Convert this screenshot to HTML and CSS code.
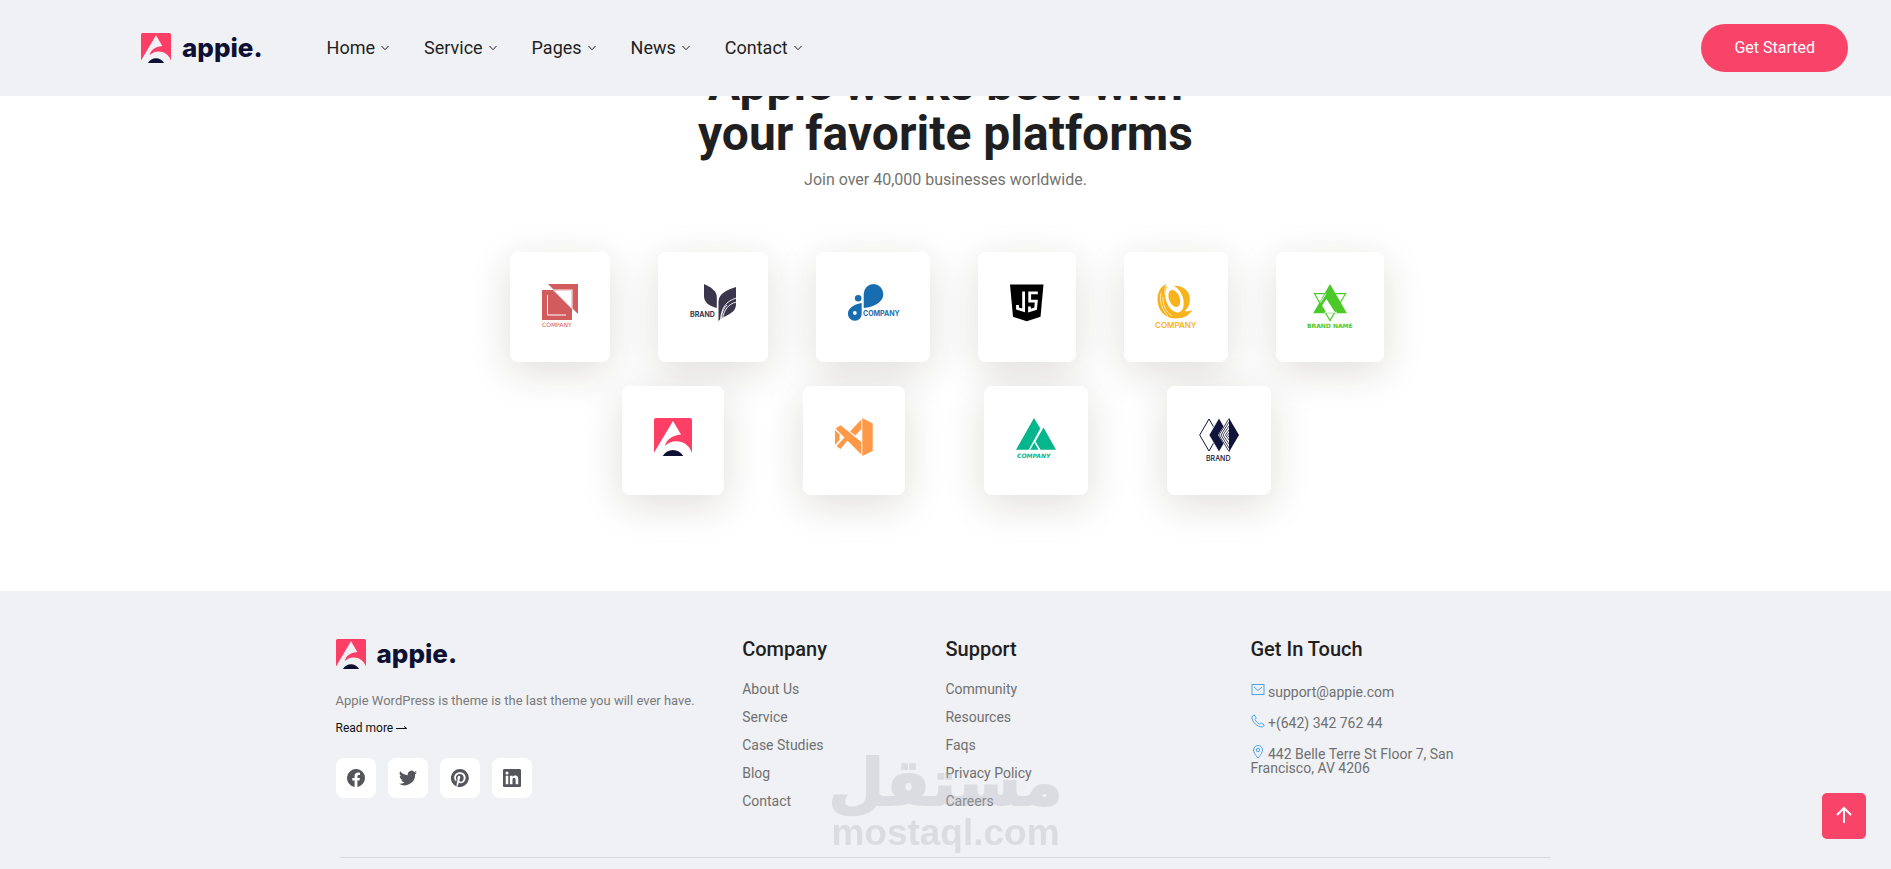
FILE: index.html
```html
<!DOCTYPE html>
<html lang="en">
<head>
<meta charset="utf-8">
<title>Appie</title>
<link rel="stylesheet" href="styles.css">
</head>
<body>
<svg class="defs" aria-hidden="true">
  <symbol id="mark" viewBox="0 0 38 38">
    <path fill="#ff3e66" d="M2 0H36a2 2 0 0 1 2 2V34.7C35 27 29 23.3 22.5 23.3C17.5 23.3 14 25 11 28C12.5 22 17 17.5 27 16.5L19 3L0 34.7V2a2 2 0 0 1 2-2z"/>
    <path fill="#0e1133" d="M8.7 38C11 34 15 32 19 32s8 2 10.3 6z"/>
  </symbol>
  <symbol id="caret" viewBox="0 0 10 10"><path d="M1.500 3L5 6.700L8.500 3" fill="none" stroke="currentColor" stroke-width="1"/></symbol>
</svg>

<header class="header">
  <a class="logo" href="#"><svg class="logo-mark"><use href="#mark"/></svg><span class="logo-text">appie.</span></a>
  <nav class="nav">
    <a href="#">Home<svg class="caret"><use href="#caret"/></svg></a>
    <a href="#">Service<svg class="caret"><use href="#caret"/></svg></a>
    <a href="#">Pages<svg class="caret"><use href="#caret"/></svg></a>
    <a href="#">News<svg class="caret"><use href="#caret"/></svg></a>
    <a href="#">Contact<svg class="caret"><use href="#caret"/></svg></a>
  </nav>
  <a class="cta" href="#">Get Started</a>
</header>

<main class="platforms">
  <h2 class="title">Appie works best with<br>your favorite platforms</h2>
  <p class="subtitle">Join over 40,000 businesses worldwide.</p>

  <div class="brands">
    <div class="brand"><svg width="36" height="46" viewBox="0 0 36 46">
      <path fill="#d15b5d" d="M6 0H36V30z"/><path fill="#fff" d="M11 5.500H30.500V25z"/>
      <path fill="#d15b5d" d="M0 6H11L30 25V36H0z"/>
      <path fill="none" stroke="#e9a9aa" stroke-width=".7" d="M11 6.300H29.700V25"/>
      <path fill="none" stroke="#fff" stroke-width="1" d="M5.500 11V31H24"/>
      <text class="tiny red" x="0" y="43">COMPANY</text></svg></div>
    <div class="brand"><svg width="46" height="46" viewBox="0 0 46 46">
      <path fill="#3c364c" d="M14 0V12C14 19 20 22 26.800 24V13C26.800 7 21 3 14 0zM46 3V20C46 30 36 30 28.500 37V18C28.500 10 36 6 46 3z"/>
      <path fill="none" stroke="#fff" stroke-width=".9" d="M46.500 14C36 17 31 24 30.500 37M46.500 18C38 20 34 26 32.500 35M37 21C33 25 32 29 31 36"/>
      <text class="small violet" x="0" y="33">BRAND</text></svg></div>
    <div class="brand"><svg width="50" height="46" viewBox="0 0 50 46">
      <path fill="#176db0" d="M15.700 24V10a9.800 10 0 1 1 19.600 0C35.300 19 25 23 15.700 24zM13.700 19V29a6.900 6.900 0 1 1-13.700 0C0 24 7 20 13.700 19z"/>
      <circle fill="#176db0" cx="10.200" cy="14.300" r="3.300"/><circle fill="#fff" cx="6.800" cy="29" r="1.900"/>
      <text class="small blue" x="15" y="32">COMPANY</text></svg></div>
    <div class="brand"><svg width="34" height="46" viewBox="0 0 34 46">
      <path d="M0 .5H33.500L30.500 32.800L16.700 37.300L3 32.800z"/>
      <path fill="none" stroke="#fff" stroke-width="2.800" d="M13.600 7.500V26.300L7.500 24.500V21M27.800 8.900H19.700V17.200H26.300L25.600 24.600L19.500 26.500V22.500"/></svg></div>
    <div class="brand"><svg width="40" height="46" viewBox="0 0 40 46">
      <path fill="#f8b21c" d="M11 0C4 2 1.500 9 1.500 16C2 27 9 34.500 20 34.500C28 34.500 33 31 36.500 26C33 27.500 31 27.500 28.500 27C33 24 34.500 18 33.500 12C32 5 24 0 14 2.500C9 4 8 3 11 0z"/>
      <ellipse fill="#fff" cx="18.500" cy="15" rx="8.500" ry="14" transform="rotate(-20 18.500 15)"/>
      <ellipse fill="#f8b21c" cx="18.300" cy="14.500" rx="5.300" ry="9" transform="rotate(-22 18.300 14.500)"/>
      <path fill="none" stroke="#fff" stroke-width=".7" d="M5 9C3.500 18 6 26 12 32M7 13C6.500 21 10 28 16 32M12 0C9 3 8.500 6 9 11"/>
      <text class="medium amber" x="-1" y="44">COMPANY</text></svg></div>
    <div class="brand"><svg width="44" height="46" viewBox="0 0 44 46">
      <path fill="none" stroke="#4bc927" stroke-width="1.200" d="M6.500 9.700H37.500L22 36.500z"/>
      <path fill="#4bc927" d="M22 0L38.900 29.300H5.200z"/>
      <path fill="#fff" d="M18.500 15L14 21.500L18 28.300H27z"/>
      <path fill="none" stroke="#fff" stroke-width=".9" d="M18 9.500L12.500 18.500M16.500 28.300H29"/>
      <path fill="none" stroke="#4bc927" stroke-width=".8" d="M10 16L17 28"/>
      <text class="tiny bold green" x="-1" y="44">BRAND NAME</text></svg></div>
  </div>
  <div class="brands wide">
    <div class="brand"><svg width="38" height="45" viewBox="0 0 38 45"><use href="#mark" width="38" height="38"/></svg></div>
    <div class="brand"><svg width="38" height="45" viewBox="0 0 38 45">
      <path fill="#ff9948" d="M27.300 0L37.700 5.500V33L27.300 38zM.5 10.500L5.500 7.300L26.300 24V36.500zM26.300 1.500V11L20.500 17.500L15 13.500zM9.500 19.500L13 22L5.500 31L1.500 28zM0 12L4.600 16.500V22L0 27z"/></svg></div>
    <div class="brand"><svg width="40" height="45" viewBox="0 0 40 45">
      <path fill="#05b58b" d="M18 0L24.300 10.500L12.700 31.700H0zM27.500 9.500L40 31.700H24.500L19.500 23.500zM18.300 24.500L22.500 31.700H14.300z"/>
      <text class="tiny bold italic teal" x="1" y="40">COMPANY</text></svg></div>
    <div class="brand"><svg width="40" height="45" viewBox="0 0 40 45">
      <path fill="#fff" stroke="#10133a" d="M10 1L19.300 17L10 33L.7 17z"/>
      <path fill="#10133a" stroke="#fff" stroke-width=".7" d="M20 0L30 17L20 34L10 17z"/>
      <path fill="#fff" d="M30 0V34L19 17z"/><path fill="#10133a" d="M30 0L40 17L30 34z"/>
      <path fill="none" stroke="#10133a" stroke-width=".8" d="M30 .5L20 17L30 33.500M30 4L22 17L30 30M30 8L24 17L30 26M30 12L26.500 17L30 22M30 15L28.500 17L30 19"/>
      <text class="small light navy" x="7" y="43">BRAND</text></svg></div>
  </div>
</main>

<footer class="footer">
  <div class="footer-grid">
    <section class="about">
      <a class="logo" href="#"><svg class="logo-mark"><use href="#mark"/></svg><span class="logo-text">appie.</span></a>
      <p class="about-text">Appie WordPress is theme is the last theme you will ever have.</p>
      <a class="more" href="#">Read more <svg width="12" height="8" viewBox="0 0 12 8"><path d="M0 4.500H10.500M8 2.500L10.800 4.500" fill="none" stroke="currentColor"/></svg></a>
      <div class="social">
        <a href="#" aria-label="Facebook"><svg viewBox="0 0 18 18"><path d="M18 9a9 9 0 1 0-10.400 8.900v-6.300H5.300V9h2.300V7c0-2.300 1.300-3.500 3.400-3.500 1 0 2 .2 2 .2v2.200h-1.100c-1.100 0-1.500.7-1.500 1.400V9h2.500l-.4 2.600h-2.100v6.300A9 9 0 0 0 18 9z"/></svg></a>
        <a href="#" aria-label="Twitter"><svg viewBox="0 0 24 24"><path d="M24 4.600a10 10 0 0 1-2.800.8 5 5 0 0 0 2.100-2.700 10 10 0 0 1-3.100 1.200 4.900 4.900 0 0 0-8.400 4.500A14 14 0 0 1 1.700 3.100a4.900 4.900 0 0 0 1.500 6.600 4.900 4.900 0 0 1-2.200-.6 4.900 4.900 0 0 0 4 4.900 5 5 0 0 1-2.300.1 4.900 4.900 0 0 0 4.600 3.400A9.900 9.900 0 0 1 0 19.500 14 14 0 0 0 21.500 7.100 10 10 0 0 0 24 4.600z"/></svg></a>
        <a href="#" aria-label="Pinterest"><svg viewBox="0 0 24 24"><path d="M12 0a12 12 0 0 0-4.400 23.200c-.1-1-.2-2.400 0-3.400l1.400-6s-.4-.7-.4-1.800c0-1.600 1-2.900 2.200-2.900 1 0 1.500.8 1.500 1.700 0 1-.7 2.600-1 4-.3 1.200.6 2.200 1.800 2.200 2.100 0 3.800-2.200 3.800-5.500 0-2.900-2.100-4.900-5-4.900a5.200 5.200 0 0 0-5.400 5.200c0 1 .4 2.100.9 2.700v.4l-.4 1.300c0 .3-.2.300-.4.200-1.500-.7-2.400-2.900-2.400-4.600 0-3.800 2.700-7.300 7.900-7.300 4.100 0 7.400 3 7.400 6.900 0 4.100-2.600 7.500-6.200 7.500-1.200 0-2.400-.6-2.800-1.400l-.7 2.900c-.3 1-1 2.300-1.500 3.100A12 12 0 1 0 12 0z"/></svg></a>
        <a href="#" aria-label="LinkedIn"><svg viewBox="0 0 18 18"><path fill-rule="evenodd" d="M1.300 0h15.400C17.400 0 18 .6 18 1.300v15.400c0 .7-.6 1.300-1.300 1.300H1.300C.6 18 0 17.400 0 16.700V1.300C0 .6.600 0 1.300 0zM2.700 6.700v8.600h2.600V6.700zM4 2.500a1.500 1.500 0 1 0 0 3.100 1.500 1.500 0 0 0 0-3.100zM6.900 6.700v8.600h2.600V11c0-1.100.2-2.200 1.600-2.200s1.500 1.300 1.500 2.300v4.200h2.700v-4.700c0-2.300-.5-4.100-3.200-4.100-1.300 0-2.200.7-2.500 1.400V6.700z"/></svg></a>
      </div>
    </section>
    <section>
      <h3 class="col-title">Company</h3>
      <ul class="links"><li><a href="#">About Us</a></li><li><a href="#">Service</a></li><li><a href="#">Case Studies</a></li><li><a href="#">Blog</a></li><li><a href="#">Contact</a></li></ul>
    </section>
    <section>
      <h3 class="col-title">Support</h3>
      <ul class="links"><li><a href="#">Community</a></li><li><a href="#">Resources</a></li><li><a href="#">Faqs</a></li><li><a href="#">Privacy Policy</a></li><li><a href="#">Careers</a></li></ul>
    </section>
    <section>
      <h3 class="col-title">Get In Touch</h3>
      <ul class="contact">
        <li><svg viewBox="0 0 14 14"><rect x="1" y="1.500" width="12" height="10"/><path d="M3 4L7 7.500L11 4"/></svg> support@appie.com</li>
        <li><svg viewBox="0 0 14 14"><path d="M.8 3L3 .8L5.300 4L4 5.500C5 7.500 6.500 9 8.500 10L10 8.800L13.300 11L11.500 13C6 13 1 8 .8 3z"/></svg> +(642) 342 762 44</li>
        <li><svg viewBox="0 0 14 14"><path d="M7 13C4 9.500 2.500 7.500 2.500 5a4.500 4.500 0 0 1 9 0C11.500 7.500 10 9.500 7 13z"/><circle cx="7" cy="5" r="1.700"/></svg> 442 Belle Terre St Floor 7, San Francisco, AV 4206</li>
      </ul>
    </section>
  </div>
  <hr class="rule">
</footer>

<div class="watermark" aria-hidden="true"><span class="wm-ar" lang="ar">مستقل</span><span class="wm-en">mostaql.com</span></div>
<button class="to-top" type="button" aria-label="Back to top"><svg width="18" height="18" viewBox="0 0 18 18"><path d="M9 17V2M2 9L9 2L16 9" fill="none" stroke="#fff" stroke-width="2"/></svg></button>
</body>
</html>
```
FILE: styles.css
```css
* { box-sizing: border-box; }
html { overflow: hidden; }
body { margin: 0; background: #fff; color: #1f1f21; font-family: Roboto, "Liberation Sans", sans-serif; }
a { color: inherit; text-decoration: none; }
ul { list-style: none; margin: 0; padding: 0; }
.defs { position: absolute; width: 0; height: 0; }

.header { position: fixed; top: 0; left: 0; right: 0; z-index: 10; display: flex; align-items: center; height: 96px; padding: 0 43px 0 141px; background: #eff1f5; }
.logo { display: flex; align-items: center; gap: 11px; height: 30px; }
.logo-mark { width: 30px; height: 30px; }
.logo-text { font: 800 26px/28px Inter, sans-serif; color: #0e1133; }
.nav { display: flex; gap: 34px; margin-left: 64px; font-size: 18px; line-height: 24px; }
.nav a { display: flex; align-items: center; gap: 5px; }
.caret { width: 10px; height: 10px; }
.cta { margin-left: auto; padding: 0 33px; border-radius: 24px; background: #f94469; color: #fff; font-size: 16px; line-height: 48px; }

.platforms { display: flex; flex-direction: column; align-items: center; padding: 59px 0 96px; }
.title { margin: 0; font-size: 48px; font-weight: 700; line-height: 50px; text-align: center; }
.subtitle { margin: 8px 0 59px; color: #73736f; font-size: 16px; line-height: 26px; }
.brands { display: flex; gap: 48px; margin-bottom: 24px; padding-left: 2px; }
.brands.wide { gap: 79px; margin-bottom: 0; }
.brand { padding: 32px; border-radius: 8px; background: rgba(255, 255, 255, .85); box-shadow: 0 10px 40px rgba(40, 32, 12, .15); }
.brand svg { display: block; overflow: visible; }
.tiny { font: 400 6px "DejaVu Sans", sans-serif; }
.small { font: 700 7px Inter, sans-serif; }
.medium { font: 600 8px Inter, sans-serif; }
.light { font-weight: 500; }
.bold { font-weight: 700; }
.italic { font-style: italic; }
.red { fill: #d15b5d; }
.violet { fill: #3c364c; }
.blue { fill: #176db0; }
.amber { fill: #f8b21c; }
.green { fill: #4bc927; }
.teal { fill: #05b58b; }
.navy { fill: #10133a; }

.footer { padding: 48px 24px; background: #eff1f5; }
.footer-grid { display: grid; grid-template-columns: 4fr 2fr 3fr 3fr; max-width: 1220px; margin: 0 auto; }
.about-text { margin: 22px 0 8px; color: #7a7a7a; font-size: 13px; line-height: 20px; }
.more { display: block; color: #111; font-size: 12px; line-height: 18px; }
.social { display: flex; gap: 12px; margin-top: 21px; }
.social a { display: grid; place-items: center; width: 40px; height: 40px; border-radius: 8px; background: #fff; }
.social svg { width: 18px; height: 18px; fill: #55565b; }
.col-title { margin: 0 0 16px; font-size: 20px; font-weight: 500; line-height: 20px; }
.links { color: #707070; font-size: 14px; line-height: 28px; }
.contact { display: grid; gap: 15px; margin-top: 24px; padding-right: 64px; color: #707070; font-size: 14px; line-height: 14px; }
.contact svg { width: 14px; height: 14px; fill: none; stroke: #4da6e8; }
.rule { max-width: 1210px; height: 1px; margin: 42px auto 0; border: 0; background: #d6d7dc; }

.watermark { position: fixed; left: 0; right: 0; bottom: 16px; z-index: 5; display: flex; flex-direction: column; align-items: center; color: #bcbcc0; opacity: .38; pointer-events: none; }
.wm-ar { font: 700 64px/60px "DejaVu Sans", sans-serif; -webkit-text-stroke: 2px #bcbcc0; }
.wm-en { font: 700 37px/40px "Liberation Sans", sans-serif; }
.to-top { position: fixed; right: 25px; bottom: 30px; z-index: 6; display: grid; place-items: center; width: 44px; height: 46px; padding: 0 0 2px; border: 0; border-radius: 5px; background: #f94469; }
```
